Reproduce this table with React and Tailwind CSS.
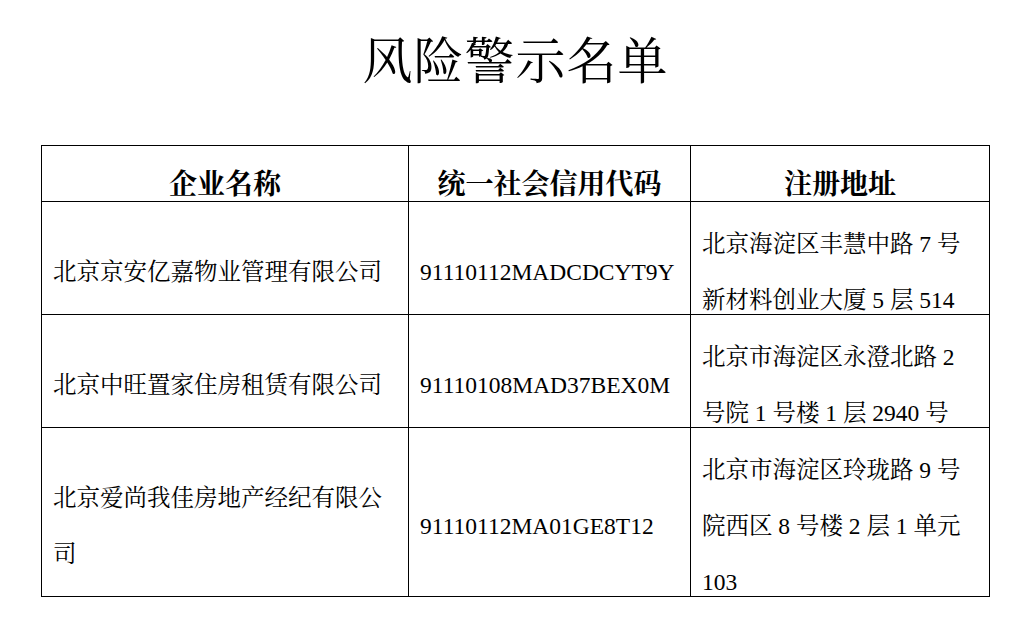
import React from "react";

const FONT = {
  fontFamily:
    '"Liberation Serif", "Noto Serif CJK SC", "Noto Sans CJK SC", serif',
};

function Line({ children }) {
  return (
    <div className="h-[56px] pt-[28px] leading-[28px] whitespace-nowrap">
      {children}
    </div>
  );
}

function Cell({ lines, h }) {
  return (
    <div
      className={`${h} border-b border-r border-black flex flex-col justify-center px-[11px] text-[23.5px] text-black`}
    >
      {lines.map((l, i) => (
        <Line key={i}>{l}</Line>
      ))}
    </div>
  );
}

const rows = [
  {
    h: "h-[113px]",
    name: ["北京京安亿嘉物业管理有限公司"],
    code: ["91110112MADCDCYT9Y"],
    addr: ["北京海淀区丰慧中路 7 号", "新材料创业大厦 5 层 514"],
  },
  {
    h: "h-[113px]",
    name: ["北京中旺置家住房租赁有限公司"],
    code: ["91110108MAD37BEX0M"],
    addr: ["北京市海淀区永澄北路 2", "号院 1 号楼 1 层 2940 号"],
  },
  {
    h: "h-[169px]",
    name: ["北京爱尚我佳房地产经纪有限公", "司"],
    code: ["91110112MA01GE8T12"],
    addr: ["北京市海淀区玲珑路 9 号", "院西区 8 号楼 2 层 1 单元", "103"],
  },
];

export default function App() {
  return (
    <div className="w-[1014px] h-[619px] bg-white overflow-hidden" style={FONT}>
      <div className="w-[949px] ml-[41px]">
        <div className="pt-[37px] pb-[58px] leading-[50px] text-[50px] text-center tracking-[1px] text-black font-normal">
          风险警示名单
        </div>
        <div className="w-[949px] grid grid-cols-[367px_282px_299px] border-l border-t border-black">
          {["企业名称", "统一社会信用代码", "注册地址"].map((t) => (
            <div
              key={t}
              className="h-[56px] border-r border-b border-black text-center pt-[25px] leading-[28px] text-[28px] font-bold text-black"
            >
              {t}
            </div>
          ))}
          {rows.map((r, i) => (
            <React.Fragment key={i}>
              <Cell lines={r.name} h={r.h} />
              <Cell lines={r.code} h={r.h} />
              <Cell lines={r.addr} h={r.h} />
            </React.Fragment>
          ))}
        </div>
      </div>
    </div>
  );
}
